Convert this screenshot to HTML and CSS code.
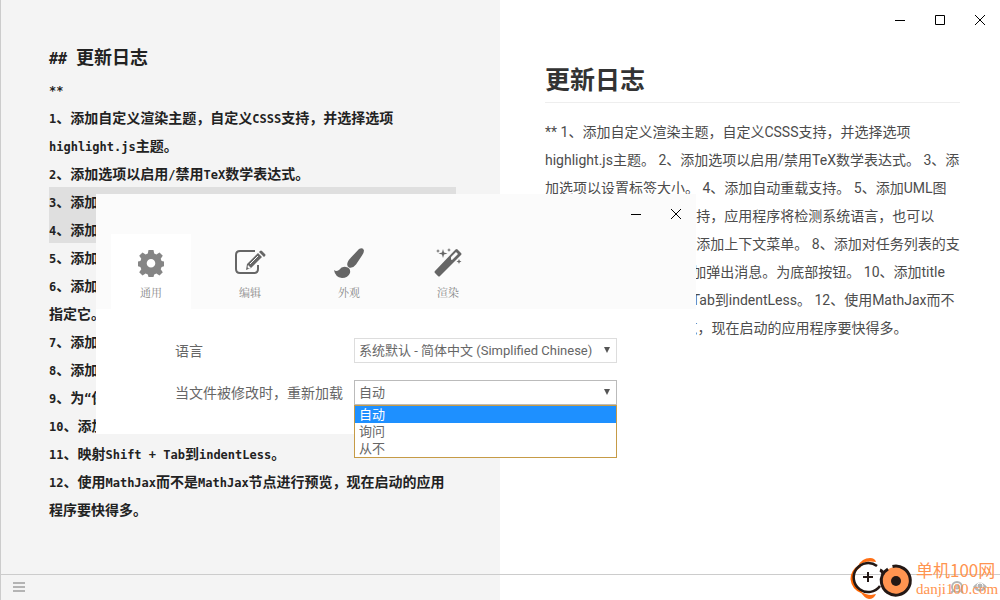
FILE: index.html
```html
<!DOCTYPE html>
<html lang="zh-CN">
<head>
<meta charset="utf-8">
<title>更新日志</title>
<link rel="stylesheet" href="styles.css">
</head>
<body>
<div class="app">
  <main class="panes">
    <section class="editor">
      <h2 class="editor-title"><span class="latin">##&nbsp;</span>更新日志</h2>
      <div class="line"><span class="latin">**</span></div>
      <div class="line"><span class="latin">1</span>、添加自定义渲染主题，自定义<span class="latin">CSSS</span>支持，并选择选项<br><span class="latin">highlight.js</span>主题。</div>
      <div class="line"><span class="latin">2</span>、添加选项以启用<span class="latin">/</span>禁用<span class="latin">TeX</span>数学表达式。</div>
      <div class="line selected"><span class="latin">3</span>、添加选项以设置标签大小。</div>
      <div class="line selected"><span class="latin">4</span>、添加自动重载支持。</div>
      <div class="line"><span class="latin">5</span>、添加<span class="latin">UML</span>图支持。</div>
      <div class="line"><span class="latin">6</span>、添加国际化支持，应用程序将检测系统语言，也可以<br>指定它。</div>
      <div class="line"><span class="latin">7</span>、添加选项并添加上下文菜单。</div>
      <div class="line"><span class="latin">8</span>、添加对任务列表的支持。</div>
      <div class="line"><span class="latin">9</span>、为<span class="latin">“</span>保存<span class="latin">”</span>按钮添加弹出消息。</div>
      <div class="line"><span class="latin">10</span>、添加<span class="latin">title</span>属性。</div>
      <div class="line"><span class="latin">11</span>、映射<span class="latin">Shift + Tab</span>到<span class="latin">indentLess</span>。</div>
      <div class="line"><span class="latin">12</span>、使用<span class="latin">MathJax</span>而不是<span class="latin">MathJax</span>节点进行预览，现在启动的应用<br>程序要快得多。</div>
    </section>
    <section class="preview">
      <div class="window-controls">
        <button class="window-button" aria-label="最小化"><svg width="12" height="12" viewBox="0 0 12 12"><path d="M1 6.500h10"/></svg></button>
        <button class="window-button" aria-label="最大化"><svg width="12" height="12" viewBox="0 0 12 12"><path d="M1.500 1.500h9v9h-9z"/></svg></button>
        <button class="window-button" aria-label="关闭"><svg width="12" height="12" viewBox="0 0 12 12"><path d="M1 1l10 10M11 1L1 11"/></svg></button>
      </div>
      <article class="article">
        <h1 class="article-title">更新日志</h1>
        <p class="article-text">** 1、添加自定义渲染主题，自定义CSSS支持，并选择选项<br>highlight.js主题。 2、添加选项以启用/禁用TeX数学表达式。 3、添<br>加选项以设置标签大小。 4、添加自动重载支持。 5、添加UML图<br>支持。 6、添加国际化支持，应用程序将检测系统语言，也可以<br>指定它。 7、添加选项并添加上下文菜单。 8、添加对任务列表的支<br>持。 9、为“保存”按钮添加弹出消息。为底部按钮。 10、添加title<br>属性。 11、映射Shift + Tab到indentLess。 12、使用MathJax而不<br>是MathJax节点进行预览，现在启动的应用程序要快得多。</p>
      </article>
    </section>
  </main>
  <footer class="statusbar">
    <div class="status-left">
      <button class="status-button" aria-label="菜单"><svg width="14" height="12" viewBox="0 0 14 12" fill="none" stroke="#b4b4b4" stroke-width="2"><path d="M1 2h12M1 6h12M1 10h12"/></svg></button>
    </div>
    <div class="status-right">
      <button class="status-button" aria-label="同步"><svg width="14" height="14" viewBox="0 0 14 14" fill="none" stroke="#b4b4b4" stroke-width="2"><circle cx="7" cy="7" r="5"/><circle cx="7" cy="7" r="1.500"/><path d="M1 13l3-3M13 13l-3-3"/></svg></button>
      <button class="status-button" aria-label="预览"><svg width="16" height="12" viewBox="0 0 16 12"><path d="M1 6Q8-3 15 6Q8 15 1 6z" fill="#b4b4b4"/><circle cx="8" cy="5" r="3" fill="none" stroke="#fff"/></svg></button>
    </div>
  </footer>

  <div class="dialog" role="dialog" aria-label="设置">
    <header class="dialog-header">
      <div class="dialog-controls">
        <button class="window-button" aria-label="最小化"><svg width="12" height="12" viewBox="0 0 12 12"><path d="M1 6.500h10"/></svg></button>
        <button class="window-button" aria-label="关闭"><svg width="12" height="12" viewBox="0 0 12 12"><path d="M1 1l10 10M11 1L1 11"/></svg></button>
      </div>
      <nav class="tabs">
        <button class="tab active">
          <svg width="32" height="32" viewBox="0 0 32 32"><path fill="#858585" fill-rule="evenodd" d="M13.500 3h5l.7 3.600 2.200.9 3.100-2.100 3.300 3.300-2.100 3.100.9 2.200 2.400.5v4.800l-2.400.7-.9 2.200 2.100 3.100-3.300 3.300-3.100-2.100-2.200.9-.7 2.600h-5l-.7-2.600-2.200-.9-3.100 2.100-3.300-3.300 2.100-3.100-.9-2.200L3 19.300v-4.800l2.400-.5.9-2.200-2.100-3.100 3.300-3.300 3.100 2.100 2.200-.9zM16 12a4.300 4.300 0 1 0 0 8.600 4.300 4.300 0 0 0 0-8.600z"/></svg>
          <span>通用</span>
        </button>
        <button class="tab">
          <svg width="32" height="32" viewBox="0 0 32 32"><path fill="none" stroke="#666" stroke-width="2" d="M21 4H6Q2 4 2 8v14q0 4 4 4h14q4 0 4-4v-4"/><path fill="#666" d="M24 6l4 4-11 11-5 2 1-6zM25 5l1-1q1-1 2 0l3 3q1 1 0 2l-1 1z"/><path stroke="#fafafa" d="M16 17l8-8" fill="none"/><path fill="#fafafa" d="M14 18l3 3-2 .7-1.500-1.500z"/></svg>
          <span>编辑</span>
        </button>
        <button class="tab">
          <svg width="32" height="32" viewBox="0 0 32 32"><path fill="#666" d="M26 2Q30 0 31 3.500q0 2-2 5l-6 9q-3 4-7 3-3-2-1-6 1-2 3-4zM1 23q2 2 5 0 3-4 7-3 5 1 4 6-2 5-8 5-7-1-8-8z"/></svg>
          <span>外观</span>
        </button>
        <button class="tab">
          <svg width="32" height="32" viewBox="0 0 32 32"><path fill="#666" fill-rule="evenodd" d="M25 2l4 4q1 1 0 2L8 29q-1 1-2 0l-3-3q-1-1 0-2L23.500 2.500zM24 5l-5 5v2.500l1 .5 6-6z"/><path fill="#666" d="M11 2l1 3.500 3.500 1-3.500 1-1 3.500-1-3.500-3.500-1 3.500-1zM6 2l.6 1.500L8 4l-1.400.5L6 6l-.6-1.500L4 4l1.400-.5zM17 1l.6 1.500L19 3l-1.400.5L17 5l-.6-1.500L15 3l1.400-.5zM27 12l.7 1.800 1.800.7-1.800.7L27 17l-.7-1.800-1.800-.7 1.800-.7z"/></svg>
          <span>渲染</span>
        </button>
      </nav>
    </header>
    <form class="settings">
      <label class="setting-label" for="language">语言</label>
      <div class="select-box">
        <select class="select" id="language"><option>系统默认 - 简体中文 (Simplified Chinese)</option></select>
        <svg class="arrow" width="6" height="6" viewBox="0 0 6 6"><path d="M0 0h6L3 6z"/></svg>
      </div>
      <label class="setting-label" for="reload">当文件被修改时，重新加载</label>
      <div class="select-box open">
        <select class="select" id="reload"><option>自动</option><option>询问</option><option>从不</option></select>
        <svg class="arrow" width="6" height="6" viewBox="0 0 6 6"><path d="M0 0h6L3 6z"/></svg>
        <ul class="menu" role="listbox" aria-label="重新加载">
          <li class="menu-item chosen" role="option" aria-selected="true">自动</li>
          <li class="menu-item" role="option" aria-selected="false">询问</li>
          <li class="menu-item" role="option" aria-selected="false">从不</li>
        </ul>
      </div>
    </form>
  </div>

  <div class="watermark">
    <svg width="64" height="42" viewBox="0 0 64 42" fill="none">
      <path stroke="#f60" stroke-width="3" d="M10 8Q2 13 2 21q1 9 10 13"/>
      <path fill="#ff6f14" d="M8 8Q12 0 20 0q5 0 6 4l-5-.5Q14 3 8 8zM10 33q6 4 11 4l5-1q-2 5-7 5-5-1-9-8z"/>
      <path stroke="#231815" stroke-width="2.500" d="M27 8a14.500 14.500 0 1 0 3 20"/>
      <path stroke="#231815" stroke-width="2" d="M18 14v10M13 19h10"/>
      <circle cx="46" cy="23" r="14" fill="#ff9450"/>
      <path stroke="#231815" stroke-width="3" d="M30 12q3 1 3 5M38 11q-8 5-6.500 14a14.500 14.500 0 1 0 11-16.500"/>
      <circle cx="46" cy="23" r="5" fill="#231815"/>
    </svg>
    <div class="watermark-text">
      <span class="watermark-name">单机100网</span>
      <span class="watermark-url">danji100.com</span>
    </div>
  </div>
</div>
</body>
</html>
```
FILE: styles.css
```css
* { box-sizing: border-box; }

body {
  margin: 0;
  font-family: Roboto, "Noto Sans CJK SC", sans-serif;
  font-size: 14px;
  color: #444;
  background: #fff;
}

button {
  border: 0;
  padding: 0;
  background: none;
  font: inherit;
  color: inherit;
}

.app {
  position: relative;
  display: flex;
  flex-direction: column;
  min-height: 100vh;
  overflow: hidden;
}

.panes {
  display: grid;
  grid-template-columns: 1fr 1fr;
  flex: 1;
}

.editor {
  padding: 39px 44px 0 48px;
  border-left: 1px solid #ccc;
  background: #f4f4f4;
  color: #222;
  font-family: "Noto Sans CJK SC", sans-serif;
  font-weight: bold;
  white-space: nowrap;
}

.editor-title {
  margin: 0 0 2px;
  font-size: 18px;
  line-height: 34px;
}

.line { line-height: 28px; }

.latin {
  font-family: "DejaVu Sans Mono", monospace;
  font-size: 12px;
  line-height: 1;
}

.editor-title .latin { font-size: 15px; }

.selected { background: #dfdfdf; }

.preview { background: #fff; }

.window-controls,
.dialog-controls {
  display: flex;
  justify-content: flex-end;
  height: 40px;
}

.window-button {
  display: flex;
  align-items: center;
  justify-content: center;
  width: 40px;
  height: 40px;
}

.window-button svg {
  fill: none;
  stroke: #000;
  stroke-width: 1;
}

.article { padding: 20px 40px 0 45px; }

.article-title {
  margin: 0 0 15px;
  border-bottom: 1px solid #eee;
  color: #333;
  font-size: 25px;
  line-height: 42px;
}

.article-text {
  margin: 0;
  color: #4c4c4c;
  line-height: 28px;
  white-space: nowrap;
}

.statusbar {
  display: grid;
  grid-template-columns: 1fr 1fr;
  height: 26px;
}

.status-left,
.status-right {
  display: flex;
  align-items: center;
  gap: 8px;
  padding-bottom: 2px;
  border-top: 1px solid #ccc;
}

.status-left {
  padding-left: 11px;
  border-left: 1px solid #ccc;
  background: #f4f4f4;
}

.status-right {
  justify-content: flex-end;
  padding-right: 12px;
}

.status-button { display: flex; }

.dialog {
  position: absolute;
  top: 194px;
  left: 96px;
  width: 600px;
  background: #fff;
}

.dialog-header { background: #fbfbfb; }

.tabs {
  display: flex;
  gap: 19px;
  padding-left: 15px;
}

.tab {
  display: flex;
  flex-direction: column;
  align-items: center;
  gap: 4px;
  width: 80px;
  height: 75px;
  padding-top: 13px;
  color: #888;
  font-family: "Noto Serif CJK SC", "Noto Sans CJK SC", sans-serif;
  font-size: 11px;
  line-height: 18px;
}

.active { background: #fff; }

.settings {
  display: grid;
  grid-template-columns: 179px 263px;
  row-gap: 17px;
  padding: 29px 0 29px 79px;
  color: #666;
}

.setting-label {
  font-family: "Noto Sans CJK SC", sans-serif;
  line-height: 25px;
}

.select-box { position: relative; }

.select {
  display: block;
  width: 100%;
  height: 25px;
  padding: 0 16px 0 4px;
  appearance: none;
  border: 1px solid #ddd;
  border-radius: 0;
  background: #fff;
  color: #666;
  font-family: Roboto, "Noto Sans CJK SC", sans-serif;
  font-size: 13px;
}

.open .select { border-color: #bbb; }

.arrow {
  position: absolute;
  top: 9px;
  right: 7px;
  fill: #555;
}

.menu {
  position: absolute;
  top: 25px;
  left: 0;
  width: 100%;
  margin: 0;
  padding: 0;
  border: 1px solid #c69b46;
  background: #fff;
  list-style: none;
}

.menu-item {
  padding-left: 4px;
  font-size: 13px;
  line-height: 17px;
}

.chosen {
  background: #1e90ff;
  color: #fff;
}

.watermark {
  position: absolute;
  right: 3px;
  bottom: 0;
  display: flex;
  gap: 2px;
  color: #ff9450;
}

.watermark-text {
  display: flex;
  flex-direction: column;
  width: 81px;
  white-space: nowrap;
}

.watermark-name {
  font-family: "Noto Sans CJK SC", sans-serif;
  font-size: 17px;
  line-height: 24px;
}

.watermark-url {
  font-family: "Liberation Serif", serif;
  font-size: 15px;
  line-height: 15px;
}
```
